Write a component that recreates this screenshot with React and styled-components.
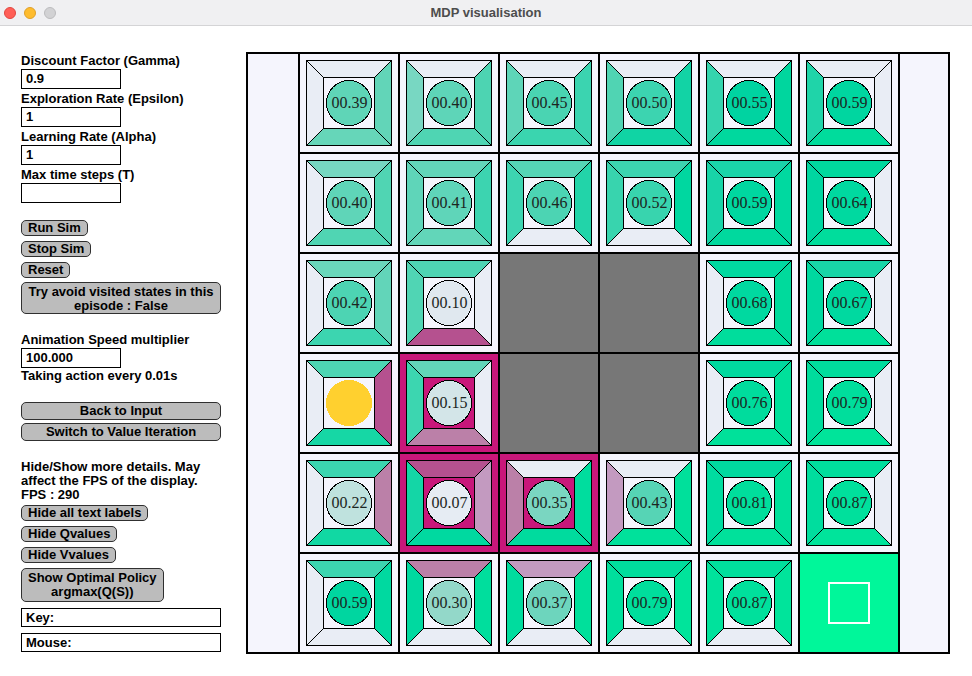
import React from 'react';
import styled, { createGlobalStyle } from 'styled-components';

const GlobalStyle = createGlobalStyle`
  html, body { margin: 0; padding: 0; background: #ffffff; }
  body { font-family: "Liberation Sans", Arial, sans-serif; }
`;

const Window = styled.div`
  width: 972px;
  height: 676px;
  display: flex;
  flex-direction: column;
  background: #ffffff;
  overflow: hidden;
`;

const TitleBar = styled.div`
  height: 25px;
  flex: none;
  border-bottom: 1px solid #d4d4d6;
  background: #f0f0f2;
  display: grid;
  grid-template-columns: 1fr auto 1fr;
  align-items: center;
`;

const Lights = styled.div`
  display: flex;
  gap: 8px;
  padding-left: 4px;
`;

const Light = styled.span`
  width: 12px;
  height: 12px;
  box-sizing: border-box;
  border-radius: 50%;
  background: ${p => p.$c};
  border: 1px solid ${p => p.$b};
`;

const Title = styled.div`
  font: bold 13px/16px "Liberation Sans", Arial, sans-serif;
  color: #4d4d4d;
`;

const Body = styled.div`
  flex: 1;
  display: flex;
  align-items: flex-start;
`;

const Panel = styled.div`
  width: 246px;
  flex: none;
  box-sizing: border-box;
  padding: 25px 0 0 21px;
  display: flex;
  flex-direction: column;
  align-items: flex-start;
  font-size: 13px;
  font-weight: bold;
  color: #000;
`;

const Label = styled.div`
  height: 18px;
  box-sizing: border-box;
  padding-top: 2px;
  line-height: 16px;
  margin-top: ${p => p.$mt || 0}px;
  white-space: nowrap;
`;

const Note = styled.div`
  line-height: ${p => p.$lh}px;
  margin-top: ${p => p.$mt || 0}px;
  white-space: nowrap;
`;

const Field = styled.div`
  width: ${p => p.$w || 100}px;
  height: ${p => p.$h || 20}px;
  box-sizing: border-box;
  border: 1px solid #000;
  background: #fff;
  padding-left: 4px;
  line-height: ${p => (p.$h || 20) - 2}px;
  margin-top: ${p => p.$mt || 0}px;
`;

const Button = styled.div`
  box-sizing: border-box;
  height: ${p => p.$h || 16}px;
  width: ${p => (p.$wide ? '200px' : 'auto')};
  padding: ${p => (p.$multi ? '2px 6px' : '0 6px')};
  margin-top: ${p => p.$mt || 0}px;
  border: 1px solid #303030;
  border-radius: 5px;
  background: #bcbcbc;
  text-align: center;
  line-height: ${p => (p.$multi ? '14px' : `${(p.$h || 16) - 2}px`)};
  white-space: nowrap;
`;

const Canvas = styled.div`
  margin-top: 26px;
  width: 700px;
  height: 598px;
  border: 2px solid #000;
  background: #f5f5fd;
  display: flex;
`;

const Grid = styled.div`
  margin-left: 50px;
  display: grid;
  grid-template-columns: repeat(6, 98px);
  grid-auto-rows: 98px;
  gap: 2px;
  padding: 0 2px;
  background: #000;
  align-self: flex-start;
`;

const Cell = styled.div`
  background: ${p => p.$bg};
  display: flex;
  align-items: center;
  justify-content: center;
`;

const GoalMark = styled.div`
  width: 42px;
  height: 42px;
  box-sizing: border-box;
  border: 2px solid #ffffff;
`;

const L = '#e9edf5';
const M1 = '#b5518f';
const M2 = '#bb80a8';
const M3 = '#c39ac0';
const MAG = '#c8177a';

const rows = [
  [
    { v: '00.39', t: L, r: '#62d5b8', b: '#66d6b9', l: L, c: '#5fd5b7' },
    { v: '00.40', t: L, r: '#4dd4b2', b: '#4fd5b3', l: '#78d7c2', c: '#5ed5b8' },
    { v: '00.45', t: L, r: '#3bd4b0', b: '#3ad5af', l: '#5ed5b8', c: '#4ad4b2' },
    { v: '00.50', t: L, r: '#12d3a5', b: '#10d4a4', l: '#50d4b3', c: '#3cd4b0' },
    { v: '00.55', t: L, r: '#00d69e', b: '#00d89e', l: '#35d4ae', c: '#00d3a1' },
    { v: '00.59', t: L, r: L, b: '#00dc9c', l: '#1fd4a9', c: '#00d6a0' },
  ],
  [
    { v: '00.40', t: '#76d7c1', r: '#50d5b3', b: '#50d5b3', l: L, c: '#5fd5b8' },
    { v: '00.41', t: '#62d5b9', r: '#3cd4b0', b: '#62d6b9', l: '#5fd5b9', c: '#5fd5b9' },
    { v: '00.46', t: '#55d5b6', r: '#22d4a9', b: L, l: '#3dd4b1', c: '#4cd4b3' },
    { v: '00.52', t: '#3cd4b0', r: '#00d7a0', b: L, l: '#38d4ae', c: '#38d4ae' },
    { v: '00.59', t: '#1ad4a9', r: '#00d9a0', b: '#00d99e', l: '#18d4a8', c: '#00d7a0' },
    { v: '00.64', t: '#00d89e', r: L, b: '#00dd9c', l: '#00d6a1', c: '#00d9a0' },
  ],
  [
    { v: '00.42', t: '#6ad7bb', r: '#62d5b9', b: '#3cd5b0', l: L, c: '#4dd4b3' },
    { v: '00.10', t: '#4ed4b3', r: L, b: M1, l: '#50d5b4', c: '#e0e8ef' },
    { wall: true },
    { wall: true },
    { v: '00.68', t: '#00d9a0', r: '#00da9c', b: '#00dd9c', l: L, c: '#00d9a0' },
    { v: '00.67', t: '#18d5a7', r: L, b: '#00e09a', l: '#00d8a0', c: '#00d9a0' },
  ],
  [
    { agent: true, t: '#4dd5b3', r: M1, b: '#16d7a5', l: L },
    { v: '00.15', path: true, t: '#62d6b9', r: L, b: M2, l: '#3cd6b0', c: '#d3e5e8' },
    { wall: true },
    { wall: true },
    { v: '00.76', t: '#00d99f', r: '#00e09b', b: '#00e19a', l: L, c: '#00dc9d' },
    { v: '00.79', t: '#00dc9d', r: L, b: '#00e49a', l: '#00dc9d', c: '#00de9c' },
  ],
  [
    { v: '00.22', t: '#3bd5b0', r: M2, b: '#11d8a3', l: L, c: '#bfe2de' },
    { v: '00.07', path: true, t: M1, r: M3, b: '#00d9a0', l: '#14d6a6', c: '#e6ecf3' },
    { v: '00.35', path: true, t: L, r: '#00dd9e', b: '#00db9e', l: M2, c: '#7ad6c1' },
    { v: '00.43', t: L, r: '#00e09b', b: '#00e19b', l: M3, c: '#56d4b5' },
    { v: '00.81', t: '#00d99f', r: '#00e09b', b: '#00e19b', l: '#00dca0', c: '#00de9c' },
    { v: '00.87', t: '#00de9d', r: L, b: '#00e49b', l: '#00dd9e', c: '#00e09c' },
  ],
  [
    { v: '00.59', t: '#3cd5b0', r: '#00d9a0', b: L, l: L, c: '#00d6a0' },
    { v: '00.30', t: M2, r: '#00de9d', b: L, l: '#00d9a0', c: '#93d8c9' },
    { v: '00.37', t: M3, r: '#00e09b', b: L, l: '#00dc9e', c: '#6dd5bd' },
    { v: '00.79', t: '#00dd9d', r: '#00e49b', b: L, l: '#00df9d', c: '#00de9c' },
    { v: '00.87', t: '#00df9d', r: '#00e49b', b: L, l: '#00e29c', c: '#00e09c' },
    { goal: true },
  ],
];

const Tile = ({ cell }) => (
  <svg width="86" height="86" viewBox="0 0 86 86" shapeRendering="crispEdges">
    <g stroke="#000" strokeWidth="1">
      <polygon points="0.5,0.5 85.5,0.5 68.5,17.5 17.5,17.5" fill={cell.t} />
      <polygon points="85.5,0.5 85.5,85.5 68.5,68.5 68.5,17.5" fill={cell.r} />
      <polygon points="0.5,85.5 85.5,85.5 68.5,68.5 17.5,68.5" fill={cell.b} />
      <polygon points="0.5,0.5 17.5,17.5 17.5,68.5 0.5,85.5" fill={cell.l} />
      <rect x="17.5" y="17.5" width="51" height="51" fill={cell.path ? MAG : '#f5f5fd'} />
      {cell.agent ? null : <circle cx="43" cy="43" r="22.5" fill={cell.c} />}
    </g>
    {cell.agent ? (
      <circle cx="43" cy="43" r="23" fill="#ffd02f" />
    ) : (
      <text
        x="43.5"
        y="48"
        textAnchor="middle"
        fontFamily='"Liberation Serif", "Times New Roman", serif'
        fontSize="16"
        fill="#1c2622"
      >
        {cell.v}
      </text>
    )}
  </svg>
);

const GridCell = ({ cell }) => {
  if (cell.wall) return <Cell $bg="#777777" />;
  if (cell.goal)
    return (
      <Cell $bg="#00f79a">
        <GoalMark />
      </Cell>
    );
  return (
    <Cell $bg={cell.path ? MAG : '#f5f5fd'}>
      <Tile cell={cell} />
    </Cell>
  );
};

export default function App() {
  return (
    <>
      <GlobalStyle />
      <Window>
        <TitleBar>
          <Lights>
            <Light $c="#ff5f57" $b="#e2463f" />
            <Light $c="#febc2e" $b="#e0a028" />
            <Light $c="#d2d2d4" $b="#bcbcbe" />
          </Lights>
          <Title>MDP visualisation</Title>
          <span />
        </TitleBar>
        <Body>
          <Panel>
            <Label>Discount Factor (Gamma)</Label>
            <Field>0.9</Field>
            <Label>Exploration Rate (Epsilon)</Label>
            <Field>1</Field>
            <Label>Learning Rate (Alpha)</Label>
            <Field>1</Field>
            <Label>Max time steps (T)</Label>
            <Field />
            <Button $mt={17}>Run Sim</Button>
            <Button $mt={5}>Stop Sim</Button>
            <Button $mt={5}>Reset</Button>
            <Button $mt={4} $wide $multi $h={32}>
              Try avoid visited states in this
              <br />
              episode : False
            </Button>
            <Label $mt={16}>Animation Speed multiplier</Label>
            <Field>100.000</Field>
            <Note $lh={16}>Taking action every 0.01s</Note>
            <Button $mt={18} $wide $h={18}>Back to Input</Button>
            <Button $mt={3} $wide $h={18}>Switch to Value Iteration</Button>
            <Note $lh={14} $mt={19}>
              Hide/Show more details. May
              <br />
              affect the FPS of the display.
            </Note>
            <Note $lh={14}>FPS : 290</Note>
            <Button $mt={3}>Hide all text labels</Button>
            <Button $mt={5}>Hide Qvalues</Button>
            <Button $mt={5}>Hide Vvalues</Button>
            <Button $mt={5} $multi $h={34}>
              Show Optimal Policy
              <br />
              argmax(Q(S))
            </Button>
            <Field $mt={6} $w={200} $h={19}>Key:</Field>
            <Field $mt={6} $w={200} $h={19}>Mouse:</Field>
          </Panel>
          <Canvas>
            <Grid>
              {rows.map((row, ri) =>
                row.map((cell, ci) => <GridCell key={`${ri}-${ci}`} cell={cell} />)
              )}
            </Grid>
          </Canvas>
        </Body>
      </Window>
    </>
  );
}
